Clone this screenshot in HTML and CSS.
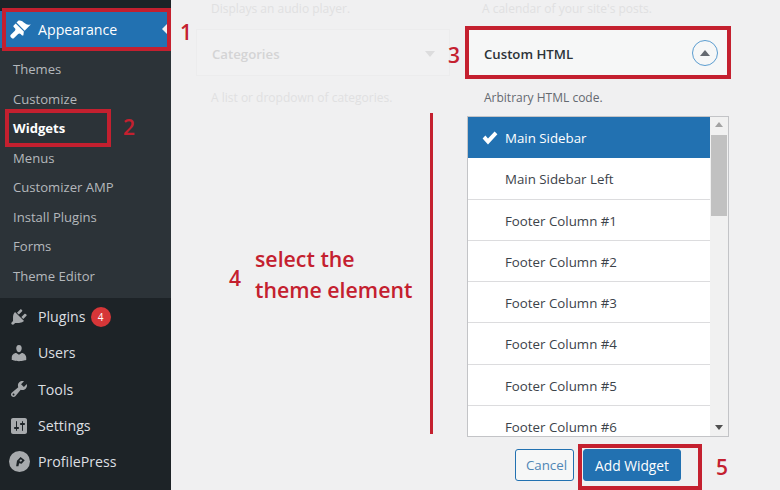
FILE: index.html
```html
<!DOCTYPE html>
<html lang="en">
<head>
  <meta charset="UTF-8" />
  <title>Widgets</title>
  <link rel="stylesheet" href="styles.css">
</head>
<body>
  <div class="page">
    <div class="sidebar">
      <div class="menu-item current">
        <svg class="icon icon-brush" viewBox="0 0 20 20"><path d="M14.48 11.06L7.41 3.99l1.5-1.5c.5-.56 2.3-.47 3.51.32 1.21.8 1.43 1.28 2.91 2.1 1.18.64 2.45 1.26 4.45.85zm-.71.71L6.7 4.7 4.93 6.47c-.39.39-.39 1.02 0 1.41l1.06 1.06c.59.59.59 1.54 0 2.12l-3.53 3.54c-.59.59-.59 1.54 0 2.12l.71.71c.59.59 1.54.59 2.12 0l3.53-3.53c.59-.59 1.54-.59 2.12 0l1.06 1.06c.39.39 1.02.39 1.41 0z" fill="#fff"/></svg>
        <span>Appearance</span>
        <i class="current-arrow"></i>
      </div>
      <div class="submenu">
        <a>Themes</a>
        <a>Customize</a>
        <a class="active">Widgets</a>
        <a>Menus</a>
        <a>Customizer AMP</a>
        <a>Install Plugins</a>
        <a>Forms</a>
        <a>Theme Editor</a>
      </div>
      <div class="menu-item">
        <svg class="icon" viewBox="0 0 20 20"><path d="M13.11 4.36L9.87 7.6 8 5.73l3.24-3.24c.35-.34 1.05-.2 1.56.32.52.51.66 1.21.31 1.55zm-8 1.77l.91-1.12 9.01 9.01-1.19.84c-.71.71-2.63 1.16-3.82 1.16H6.14L4.9 17.26c-.59.59-1.54.59-2.12 0-.59-.58-.59-1.53 0-2.12l1.24-1.24v-3.88c0-1.13.4-3.19 1.09-3.89zm7.26 3.97l3.24-3.24c.34-.35 1.04-.21 1.55.31.52.51.66 1.21.31 1.55l-3.24 3.25z" fill="#a7aaad"/></svg>
        <span>Plugins</span>
        <b class="badge">4</b>
      </div>
      <div class="menu-item">
        <svg class="icon" viewBox="0 0 20 20"><path d="M10 9.25c-2.27 0-2.73-3.44-2.73-3.44C7 4.02 7.82 2 9.97 2c2.16 0 2.98 2.02 2.71 3.81 0 0-.41 3.44-2.68 3.44zm0 2.57L12.72 10c2.39 0 4.52 2.33 4.52 4.53v2.49s-3.65 1.13-7.24 1.13c-3.65 0-7.24-1.13-7.24-1.13v-2.49c0-2.25 1.94-4.48 4.47-4.48z" fill="#a7aaad"/></svg>
        <span>Users</span>
      </div>
      <div class="menu-item">
        <svg class="icon" viewBox="0 0 20 20"><path d="M16.68 9.77c-1.34 1.34-3.3 1.67-4.95.99l-5.41 6.52c-.99.99-2.59.99-3.58 0s-.99-2.59 0-3.57l6.52-5.42c-.68-1.65-.35-3.61.99-4.95 1.28-1.28 3.12-1.62 4.72-1.06l-2.89 2.89 2.82 2.82 2.86-2.87c.53 1.58.18 3.39-1.08 4.65zM3.81 16.21c.4.39 1.04.39 1.43 0 .4-.4.4-1.04 0-1.43-.39-.4-1.03-.4-1.43 0-.39.39-.39 1.03 0 1.43z" fill="#a7aaad"/></svg>
        <span>Tools</span>
      </div>
      <div class="menu-item">
        <svg class="icon" viewBox="0 0 20 20"><path d="M18 16V4c0-1.1-.9-2-2-2H4c-1.1 0-2 .9-2 2v12c0 1.1.9 2 2 2h12c1.1 0 2-.9 2-2zM8 11h1c.55 0 1 .45 1 1s-.45 1-1 1H8v1.5c0 .28-.22.5-.5.5s-.5-.22-.5-.5V13H6c-.55 0-1-.45-1-1s.45-1 1-1h1V5.5c0-.28.22-.5.5-.5s.5.22.5.5V11zm5-2h-1c-.55 0-1-.45-1-1s.45-1 1-1h1V5.5c0-.28.22-.5.5-.5s.5.22.5.5V7h1c.55 0 1 .45 1 1s-.45 1-1 1h-1v5.5c0 .28-.22.5-.5.5s-.5-.22-.5-.5V9z" fill="#a7aaad"/></svg>
        <span>Settings</span>
      </div>
      <div class="menu-item">
        <svg class="icon icon-round" viewBox="0 0 20 20"><circle cx="10" cy="10" r="10" fill="#a7aaad"/><path d="M6.8 14.6 L7.6 9.4 L11 5.6 L15 8.8 L12 12.2 L9.6 11.6 L9 14.6 Z M9.8 9.6 L11.4 10.2 L12.6 8.8 L11.2 7.8 Z" fill="#1d2327" fill-rule="evenodd"/></svg>
        <span>ProfilePress</span>
      </div>
    </div>

    <div class="content">
      <div class="col col-left">
        <p class="desc desc-top">Displays an audio player.</p>
        <div class="widget-head">
          <span>Categories</span>
          <i class="down-arrow"></i>
        </div>
        <p class="desc">A list or dropdown of categories.</p>
      </div>

      <div class="col col-right">
        <p class="desc desc-top">A calendar of your site's posts.</p>
        <div class="widget-head open">
          <span>Custom HTML</span>
          <span class="toggle"><i></i></span>
        </div>
        <p class="desc open">Arbitrary HTML code.</p>

        <div class="chooser">
          <ul class="areas">
            <li class="selected">
              <svg class="check" viewBox="0 0 16 14"><path d="M0.6 7.4 L3.4 4.6 L6 7.4 L12.6 0.4 L15.4 3.2 L6 13.6 Z" fill="#fff"/></svg>
              Main Sidebar
            </li>
            <li>Main Sidebar Left</li>
            <li>Footer Column #1</li>
            <li>Footer Column #2</li>
            <li>Footer Column #3</li>
            <li>Footer Column #4</li>
            <li>Footer Column #5</li>
            <li>Footer Column #6</li>
          </ul>
          <div class="scrollbar">
            <i class="sb-up"></i>
            <div class="sb-thumb"></div>
            <i class="sb-down"></i>
          </div>
        </div>

        <div class="actions">
          <button class="btn-cancel">Cancel</button>
          <button class="btn-add">Add Widget</button>
        </div>
      </div>
    </div>

    <!-- red annotations drawn on top of the screenshot -->
    <div class="mark mark-appearance"></div>
    <div class="mark mark-widgets"></div>
    <div class="mark mark-html"></div>
    <div class="mark mark-add"></div>
    <div class="line-4"></div>
    <span class="note n1">1</span>
    <span class="note n2">2</span>
    <span class="note n3">3</span>
    <span class="note n4">4</span>
    <span class="note n5">5</span>
    <div class="note note-text">select the<br>theme element</div>
  </div>
</body>
</html>
```

FILE: styles.css
```css
* {
  box-sizing: border-box;
}

body {
  margin: 0;
  font-family: "Open Sans", "Noto Sans", sans-serif;
  background: #f0f0f1;
}

.page {
  position: relative;
  width: 780px;
  height: 490px;
  overflow: hidden;
  display: flex;
}

/* admin menu */
.sidebar {
  width: 171px;
  flex-shrink: 0;
  background: #1d2327;
  padding-top: 11px;
  color: #f0f0f1;
}

.menu-item {
  display: flex;
  align-items: center;
  height: 36.3px;
  padding-left: 9px;
  font-size: 14.2px;
  color: #dcdfe1;
}

.menu-item .icon {
  width: 20px;
  height: 20px;
  margin-right: 9px;
  flex-shrink: 0;
}

.menu-item .icon-brush {
  width: 23px;
  height: 23px;
  margin-left: -1px;
  margin-right: 7px;
}

.menu-item .icon-round {
  width: 21px;
  height: 21px;
  margin-right: 8px;
}

.menu-item.current {
  position: relative;
  height: 37px;
  background: #2271b1;
  color: #fff;
  margin-bottom: 7px;
}

.current-arrow {
  position: absolute;
  right: 3px;
  top: 12px;
  border: 6px solid transparent;
  border-left-width: 0;
  border-right: 6px solid #f0f0f1;
}

.submenu {
  background: #2c3338;
  margin-top: -7px;
  padding: 6.5px 0 7px;
}

.submenu a {
  display: flex;
  align-items: center;
  height: 29.5px;
  padding-left: 13px;
  font-size: 13.1px;
  color: #b4b8bc;
}

.submenu a.active {
  color: #fff;
  font-weight: 700;
}

.submenu + .menu-item {
  margin-top: 1px;
}

.badge {
  width: 20px;
  height: 20px;
  margin-left: 5px;
  border-radius: 50%;
  background: #d63638;
  color: #fff;
  font-size: 10px;
  font-weight: 400;
  line-height: 20px;
  text-align: center;
}

/* widget columns */
.content {
  flex: 1;
  display: flex;
  gap: 17px;
  padding-left: 25px;
}

.col {
  display: flex;
  flex-direction: column;
}

.col-left {
  width: 254px;
}

.col-right {
  width: 262px;
}

.desc {
  margin: 0;
  height: 40px;
  padding: 14px 0 0 15px;
  font-size: 12px;
  line-height: 16px;
  color: #e0e0e1;
}

.desc-top {
  height: 30px;
  margin-top: -8px;
  margin-bottom: 7px;
  padding-top: 9px;
}

.desc.open {
  padding-left: 17px;
  color: #646970;
}

.widget-head {
  display: flex;
  align-items: center;
  justify-content: space-between;
  height: 47px;
  padding: 2px 14px 0 15px;
  border: 1px solid #ececed;
  font-size: 13.2px;
  font-weight: 600;
  color: #d4d4d5;
  background: #f1f1f2;
}

.widget-head.open {
  padding: 2px 10px 0 16px;
  color: #2c3338;
  background: #f6f7f7;
  border-color: #f6f7f7;
}

.down-arrow {
  border: 5px solid transparent;
  border-top: 6px solid #dcdcdd;
  border-bottom: 0;
}

.toggle {
  display: flex;
  align-items: center;
  justify-content: center;
  width: 26px;
  height: 26px;
  margin-top: -2px;
  border-radius: 50%;
  border: 1.5px solid #5b9dd0;
}

.toggle i {
  border: 5px solid transparent;
  border-bottom: 6px solid #646970;
  border-top: 0;
}

/* sidebar chooser list */
.chooser {
  display: flex;
  height: 321px;
  border: 1px solid #c3c4c7;
  background: #fff;
}

.areas {
  flex: 1;
  margin: 0;
  padding: 0;
  list-style: none;
  overflow: hidden;
}

.areas li {
  position: relative;
  height: 41.3px;
  padding: 1px 0 0 37px;
  border-bottom: 1px solid #dcdcde;
  font-size: 13.3px;
  line-height: 41px;
  color: #3c434a;
}

.areas li.selected {
  background: #2271b1;
  color: #fff;
  border-bottom: 0;
}

.check {
  position: absolute;
  left: 14px;
  top: 14px;
  width: 16px;
  height: 14px;
}

.scrollbar {
  position: relative;
  width: 18px;
  background: #f1f1f1;
  padding-top: 18px;
}

.sb-thumb {
  height: 81px;
  background: #c1c1c1;
  margin: 0 1px;
}

.sb-up,
.sb-down {
  position: absolute;
  left: 5px;
  border: 4px solid transparent;
}

.sb-up {
  top: 5px;
  border-top: 0;
  border-bottom: 5px solid #a3a3a3;
}

.sb-down {
  bottom: 6px;
  border-bottom: 0;
  border-top: 5px solid #505050;
}

.actions {
  display: flex;
  gap: 9px;
  margin-top: 12px;
  padding-left: 48px;
}

.actions button {
  height: 32px;
  border-radius: 3px;
  font-family: inherit;
}

.btn-cancel {
  width: 59px;
  padding: 0 0 0 4px;
  background: #f6f7f7;
  border: 1px solid #2271b1;
  color: #4f86b5;
  font-size: 13.3px;
}

.btn-add {
  width: 98px;
  padding: 0;
  background: #2271b1;
  border: 1px solid #2271b1;
  color: #fff;
  font-size: 13.8px;
}

/* annotations */
.mark {
  position: absolute;
  border: 4px solid #c4202f;
}

.mark-appearance {
  left: 2px;
  top: 8px;
  width: 169px;
  height: 43px;
}

.mark-widgets {
  left: 5px;
  top: 109px;
  width: 106px;
  height: 38px;
}

.mark-html {
  left: 465px;
  top: 26px;
  width: 266px;
  height: 53px;
}

.mark-add {
  left: 578px;
  top: 444px;
  width: 124px;
  height: 46px;
}

.line-4 {
  position: absolute;
  left: 430px;
  top: 113px;
  width: 3px;
  height: 321px;
  background: #c4202f;
}

.note {
  position: absolute;
  color: #c4202f;
  font-size: 21px;
  line-height: 24px;
  font-weight: 600;
}

.n1 { left: 180px; top: 20px; }
.n2 { left: 123px; top: 115px; }
.n3 { left: 448px; top: 43px; }
.n4 { left: 229px; top: 266px; }
.n5 { left: 716px; top: 455px; }

.note-text {
  left: 255px;
  top: 243px;
  font-size: 21.3px;
  line-height: 31px;
}
```
